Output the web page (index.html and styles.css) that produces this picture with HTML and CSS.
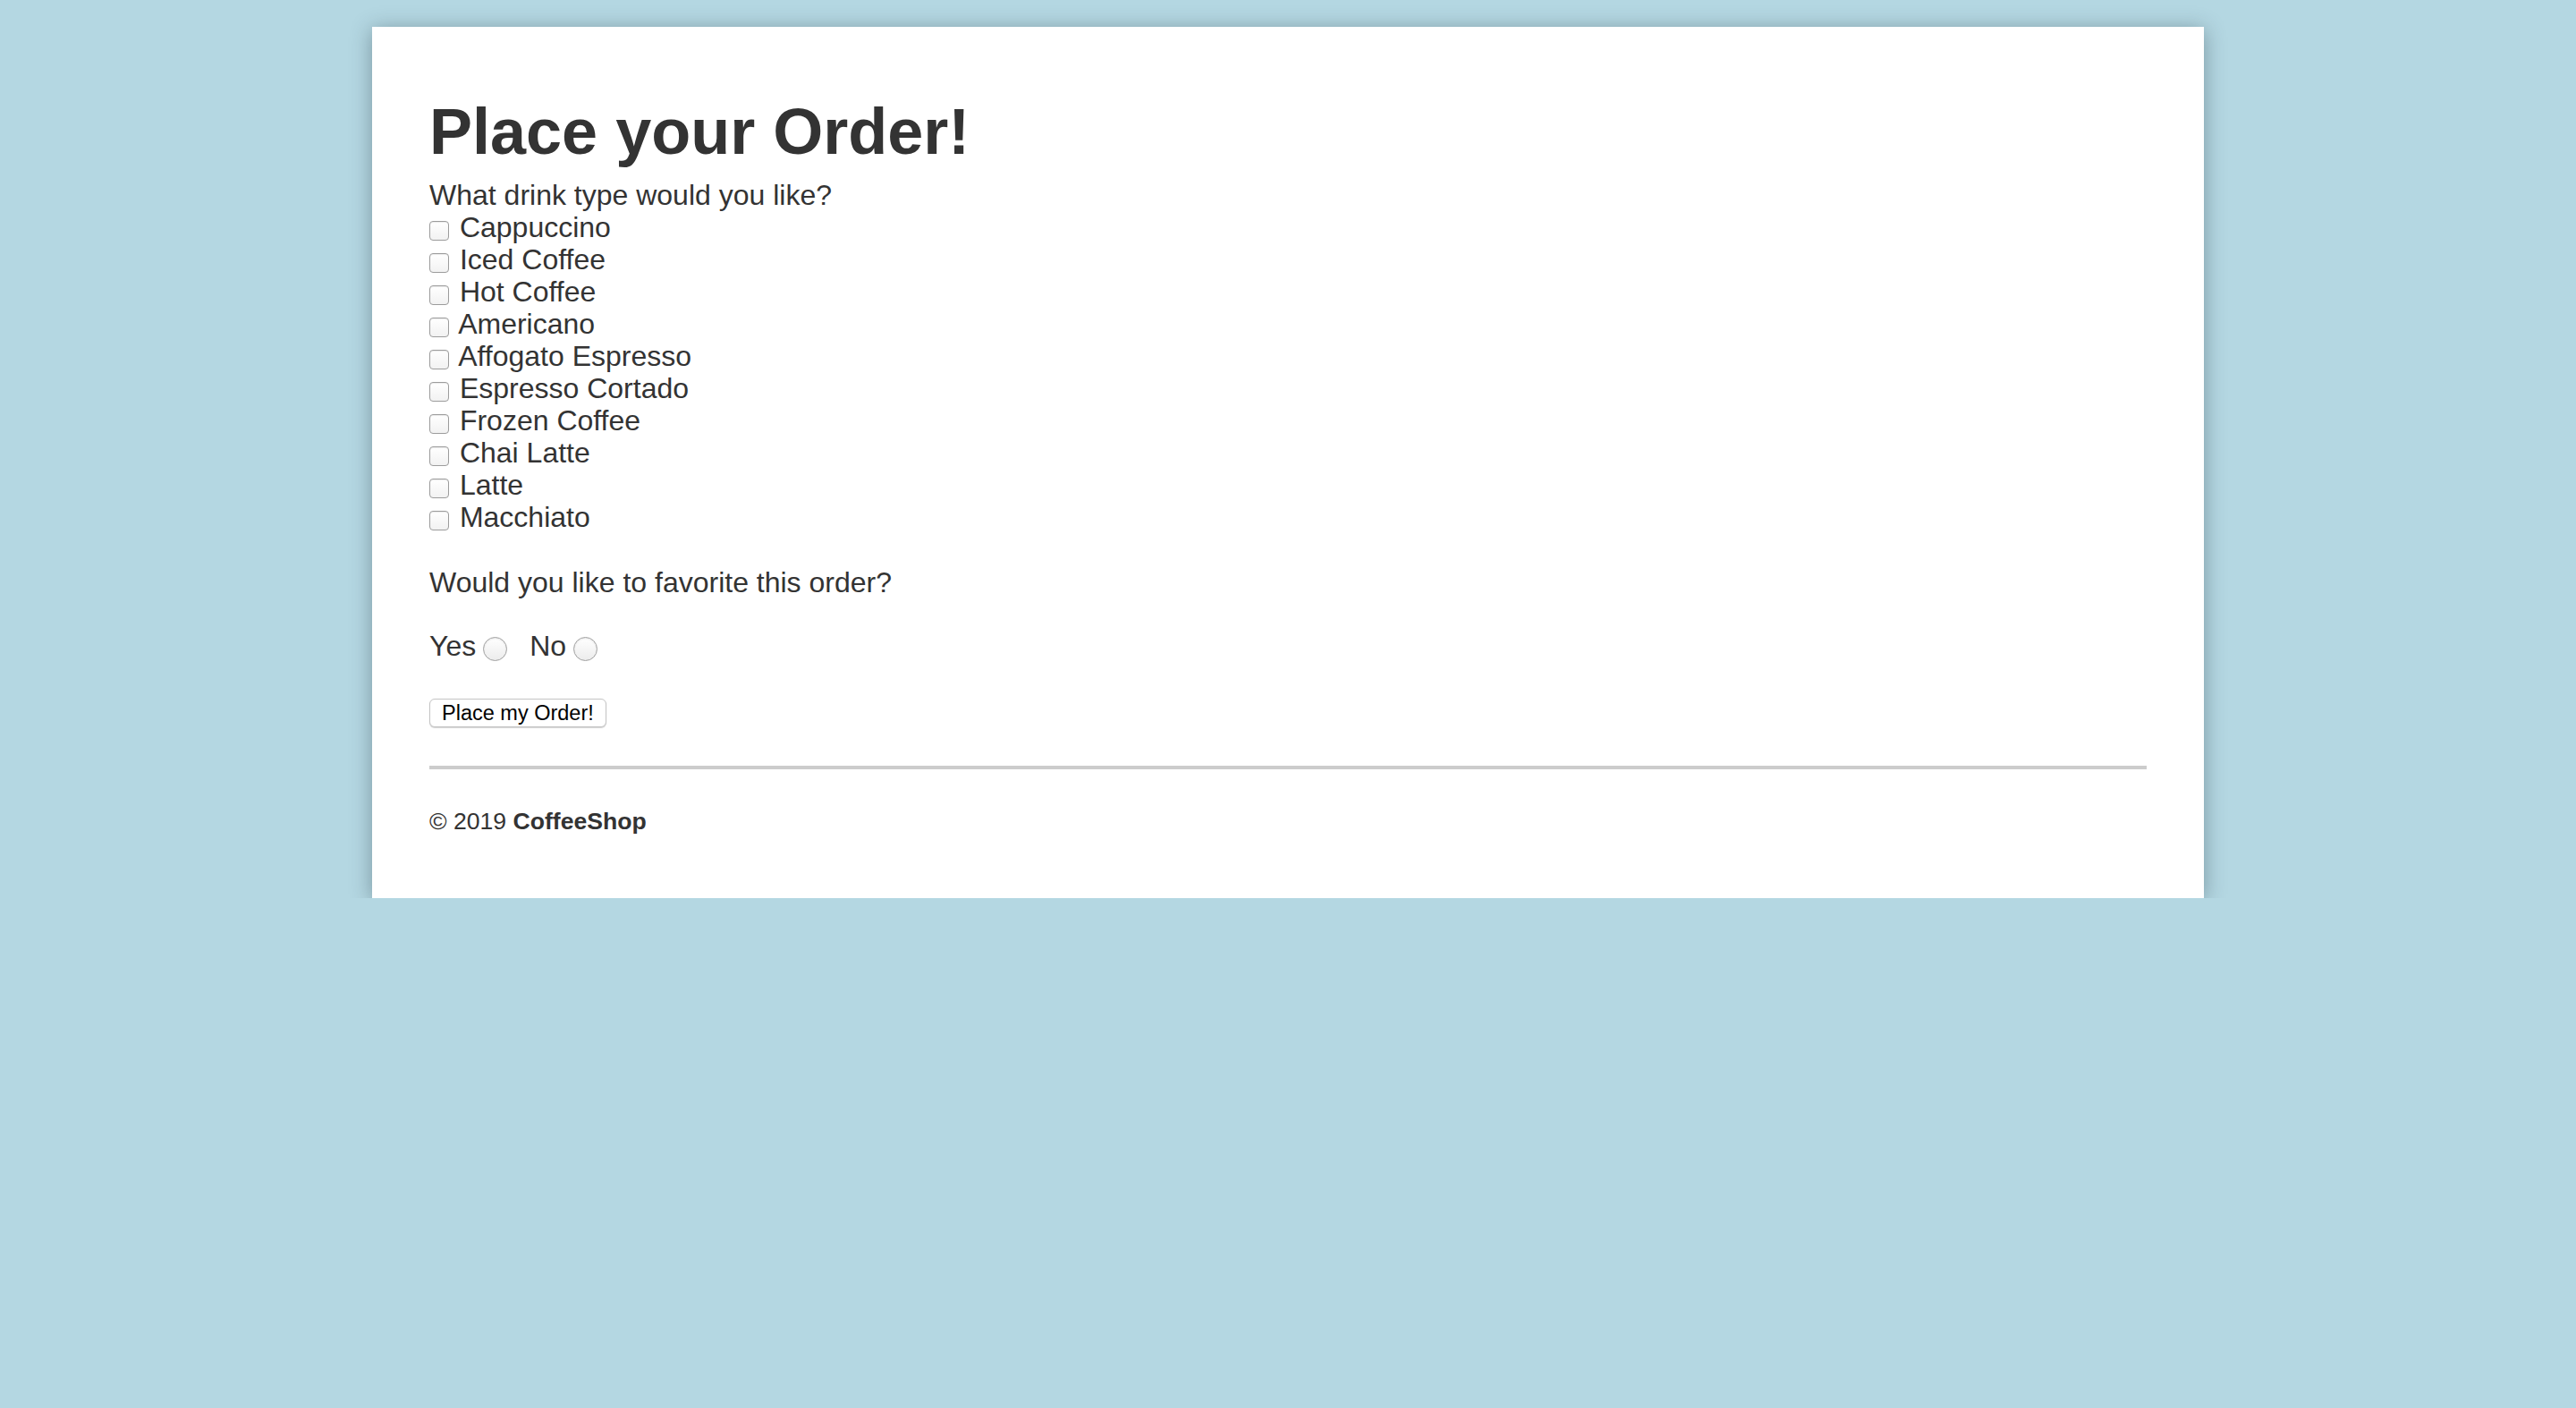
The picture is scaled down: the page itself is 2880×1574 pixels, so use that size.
FILE: index.html
```html
<!DOCTYPE html>
<html lang="en">
<head>
<meta charset="utf-8">
<title>CoffeeShop - Place your Order!</title>
<link rel="stylesheet" href="styles.css">
</head>
<body>
<main class="card">
  <h1 class="title">Place your Order!</h1>
  <form class="order-form">
    <div class="line">What drink type would you like?</div>
    <label class="line"><input type="checkbox" class="check"> Cappuccino</label>
    <label class="line"><input type="checkbox" class="check"> Iced Coffee</label>
    <label class="line"><input type="checkbox" class="check"> Hot Coffee</label>
    <label class="line"><input type="checkbox" class="check"> Americano</label>
    <label class="line"><input type="checkbox" class="check"> Affogato Espresso</label>
    <label class="line"><input type="checkbox" class="check"> Espresso Cortado</label>
    <label class="line"><input type="checkbox" class="check"> Frozen Coffee</label>
    <label class="line"><input type="checkbox" class="check"> Chai Latte</label>
    <label class="line"><input type="checkbox" class="check"> Latte</label>
    <label class="line"><input type="checkbox" class="check"> Macchiato</label>
    <div class="line question">Would you like to favorite this order?</div>
    <div class="line radios"><label>Yes</label><input type="radio" name="fav" class="radio"><label>No</label><input type="radio" name="fav" class="radio radio-last"></div>
    <button type="button" class="submit">Place my Order!</button>
  </form>
  <hr class="rule">
  <footer class="footer">© 2019 <strong>CoffeeShop</strong></footer>
</main>
</body>
</html>
```

FILE: styles.css
```css
html, body {
  margin: 0;
  padding: 0;
}

body {
  background: #b4d7e2;
  font-family: "Liberation Sans", Arial, Helvetica, sans-serif;
  color: #333333;
  padding-top: 30px;
}

.card {
  box-sizing: border-box;
  width: 2048px;
  margin: 0 auto;
  background: #ffffff;
  padding: 77px 64px 71px 64px;
  box-shadow: 0 3px 22px rgba(40, 60, 70, 0.42);
}

.title {
  margin: 0 0 13px 0;
  font-size: 72px;
  line-height: 80px;
  font-weight: bold;
  color: #333333;
}

.order-form {
  margin: 0;
}

.line {
  display: block;
  font-size: 32px;
  line-height: 36px;
  color: #333333;
}

.check {
  -webkit-appearance: none;
  appearance: none;
  box-sizing: border-box;
  width: 22px;
  height: 22px;
  margin: 0 3px 0 0;
  vertical-align: -4px;
  border: 1px solid #9c9c9c;
  border-radius: 4px;
  background: linear-gradient(#ffffff, #f2f2f2);
  box-shadow: inset 0 1px 1px rgba(0, 0, 0, 0.08);
}

.question {
  margin-top: 37px;
}

.radios {
  margin-top: 35px;
}

.radio {
  -webkit-appearance: none;
  appearance: none;
  box-sizing: border-box;
  width: 27px;
  height: 27px;
  margin: 0 25px 0 8px;
  vertical-align: -6px;
  border: 1px solid #a0a0a0;
  border-radius: 50%;
  background: linear-gradient(#ffffff, #ececec);
  box-shadow: inset 0 1px 2px rgba(0, 0, 0, 0.1);
}

.radio-last {
  margin-right: 0;
}

.submit {
  display: block;
  box-sizing: border-box;
  height: 32px;
  margin: 41px 0 0 0;
  padding: 0 13px;
  font-family: "Liberation Sans", Arial, Helvetica, sans-serif;
  font-size: 23.5px;
  line-height: 30px;
  color: #000000;
  background: #ffffff;
  border: 1px solid #c4c4c4;
  border-radius: 6px;
  box-shadow: 0 1px 1px rgba(0, 0, 0, 0.18);
}

.rule {
  margin: 43px 0 0 0;
  height: 0;
  border: 0;
  border-top: 4px solid #cccccc;
}

.footer {
  margin-top: 43px;
  font-size: 26.6px;
  line-height: 30px;
  color: #333333;
}

.footer strong {
  font-weight: bold;
}
```
